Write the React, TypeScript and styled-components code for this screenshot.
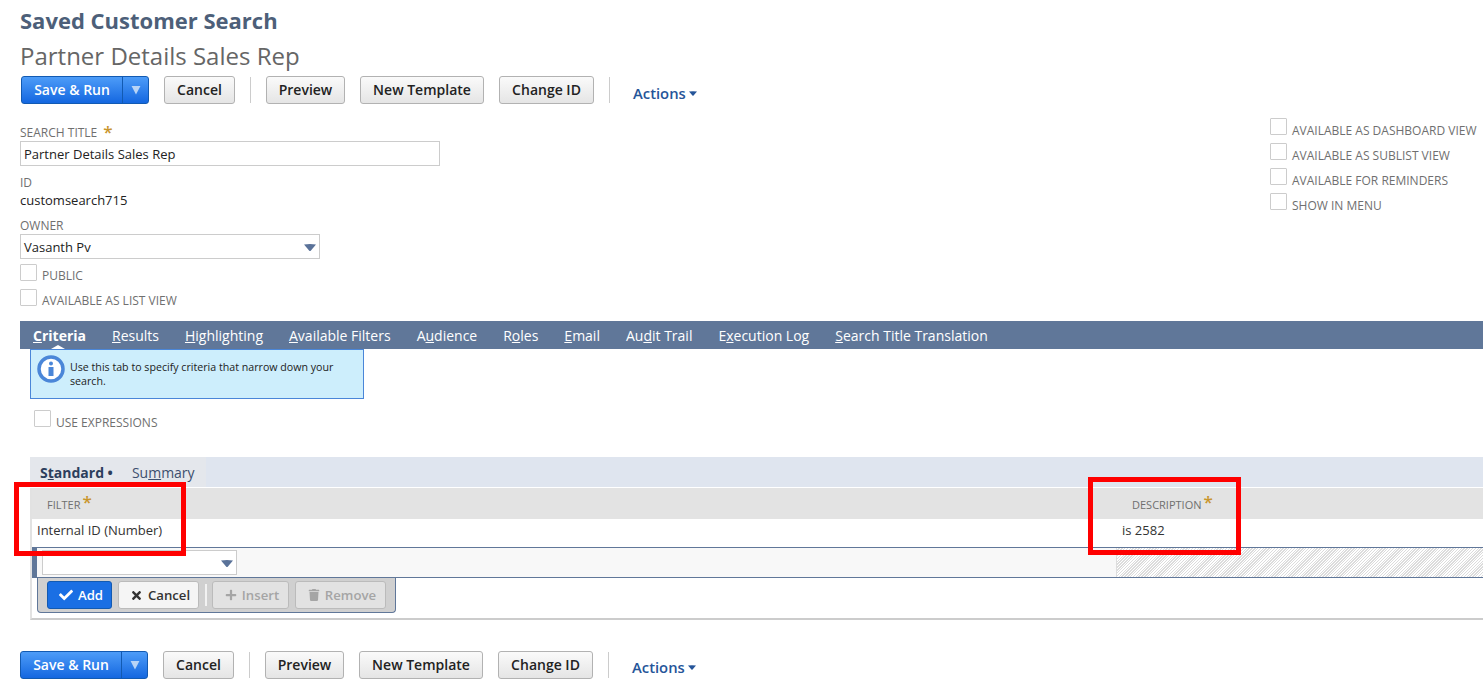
import React from "react";
import styled, { createGlobalStyle } from "styled-components";
import { FaCheck, FaTimes, FaPlus, FaTrash } from "react-icons/fa";

const Global = createGlobalStyle`
  html, body { margin: 0; padding: 0; background: #fff; }
  body { font-family: "Open Sans", "Liberation Sans", sans-serif; overflow: hidden; }
`;
const Page = styled.div`
  position: relative;
  width: 1483px;
  height: 689px;
  overflow: hidden;
`;
const Header = styled.header`
  padding: 5px 0 0 20px;
`;
const RecordType = styled.h1`
  margin: 0;
  font-size: 22px;
  line-height: 30px;
  font-weight: 700;
  color: #4d5f79;
`;
const RecordName = styled.h2`
  margin: 4px 0 0;
  font-size: 24px;
  line-height: 33px;
  font-weight: 400;
  color: #666;
`;
const Toolbar = styled.div<{ $left: number; $top: number }>`
  display: flex;
  align-items: flex-start;
  margin: ${(p) => p.$top}px 0 0 ${(p) => p.$left}px;
  height: 28px;
`;
const SplitButton = styled.div`
  display: flex;
  width: 128px;
  height: 28px;
  box-sizing: border-box;
  border: 1px solid #125ab2;
  border-radius: 3px;
  background: linear-gradient(#4d9cf8, #1467e0);
  color: #fff;
  overflow: hidden;
  margin-right: 15px;
`;
const SplitMain = styled.div`
  flex: 1;
  font-size: 14px;
  font-weight: 600;
  line-height: 26px;
  text-align: center;
`;
const SplitArrow = styled.div`
  width: 25px;
  border-left: 1px solid #125ab2;
  display: flex;
  align-items: center;
  justify-content: center;
`;
const Button = styled.div<{ $w: number }>`
  width: ${(p) => p.$w}px;
  height: 28px;
  box-sizing: border-box;
  border: 1px solid #b2b2b2;
  border-radius: 3px;
  background: linear-gradient(#fafafa, #e5e5e5);
  color: #222;
  font-size: 14px;
  font-weight: 600;
  line-height: 26px;
  text-align: center;
  margin-right: 15px;
`;
const Sep = styled.div`
  width: 1px;
  height: 26px;
  background: #ccc;
  margin: 1px 15px 0 0;
`;
const Actions = styled.div<{ $top: number }>`
  margin: ${(p) => p.$top}px 0 0 8px;
  font-size: 14.8px;
  font-weight: 600;
  line-height: 20px;
  color: #255599;
  display: flex;
  align-items: center;
  gap: 3px;
`;
const FormArea = styled.div`
  display: flex;
  justify-content: space-between;
  height: 217px;
`;
const LeftFields = styled.div`
  padding: 21px 0 0 20px;
`;
const FieldLabel = styled.div<{ $top?: number }>`
  font-size: 12px;
  line-height: 16px;
  color: #6f6f6f;
  margin-top: ${(p) => p.$top ?? 0}px;
  display: flex;
`;
const Star = styled.span`
  color: #c9952c;
  font-size: 17px;
  line-height: 14px;
  margin-left: 6px;
  font-weight: 600;
`;
const TextBox = styled.div<{ $w: number; $h: number }>`
  width: ${(p) => p.$w}px;
  height: ${(p) => p.$h}px;
  box-sizing: border-box;
  border: 1px solid #ccc;
  background: #fff;
  font-size: 13px;
  line-height: 18px;
  color: #222;
  padding: 1px 3px 0;
  display: flex;
  align-items: center;
  justify-content: space-between;
`;
const Value = styled.div`
  font-size: 13px;
  line-height: 18px;
  color: #222;
`;
const CheckRow = styled.div<{ $top?: number; $left?: number }>`
  display: flex;
  height: 25px;
  margin-top: ${(p) => p.$top ?? 0}px;
  margin-left: ${(p) => p.$left ?? 0}px;
`;
const Check = styled.div`
  width: 17px;
  height: 17px;
  box-sizing: border-box;
  border: 1px solid #ccc;
  border-radius: 1px;
  background: #fff;
  flex: none;
`;
const CheckLabel = styled.span<{ $drop?: number }>`
  font-size: 12px;
  line-height: 16px;
  color: #6f6f6f;
  margin: ${(p) => p.$drop ?? 4}px 0 0 5px;
  white-space: nowrap;
`;
const RightChecks = styled.div`
  padding: 14px 6px 0 0;
  width: 213px;
  box-sizing: border-box;
`;
const TabBar = styled.nav`
  margin-left: 20px;
  height: 28px;
  background: #607799;
  display: flex;
  align-items: flex-start;
  padding-left: 13px;
  gap: 26px;
`;
const Tab = styled.div<{ $active?: boolean }>`
  position: relative;
  height: 28px;
  font-size: 14px;
  line-height: 30px;
  color: #fff;
  font-weight: ${(p) => (p.$active ? 700 : 400)};
  white-space: nowrap;
  ${(p) =>
    p.$active &&
    `&::after {
      content: "";
      position: absolute;
      left: 18px;
      bottom: 0;
      border: 7px solid transparent;
      border-top: 0;
      border-bottom: 4px solid #fff;
    }`}
`;
const Panel = styled.section`
  margin-left: 30px;
`;
const Help = styled.div`
  width: 334px;
  height: 50px;
  box-sizing: border-box;
  border: 1px solid #4a86d8;
  background: #cdeefc;
  display: flex;
  padding: 5px 6px;
  gap: 5px;
  font-size: 10.65px;
  line-height: 14px;
  color: #222;
`;
const HelpText = styled.div`
  padding-top: 5px;
`;
const SubTabs = styled.div`
  margin-top: 22px;
  height: 30px;
  background: #dfe5ef;
  display: flex;
`;
const SubTabGroup = styled.div`
  width: 176px;
  background: #e4e7ec;
  display: flex;
  padding-left: 10px;
  gap: 19px;
  box-sizing: border-box;
  font-size: 14px;
  line-height: 32px;
`;
const SubActive = styled.span`
  font-weight: 700;
  color: #2c3e5c;
`;
const SubIdle = styled.span`
  color: #3d4f6e;
`;
const Frame = styled.div`
  border-left: 2px solid #e2e2e2;
  border-bottom: 2px solid #ccc;
  height: 132px;
  box-sizing: border-box;
  margin-top: 1px;
`;
const HeadRow = styled.div`
  height: 31px;
  background: #e3e3e3;
  display: flex;
  align-items: center;
  font-size: 11px;
  color: #6f6f6f;
`;
const HeadCell = styled.div<{ $x: number; $w?: number }>`
  margin-left: ${(p) => p.$x}px;
  ${(p) => (p.$w ? `width: ${p.$w}px;` : "")}
  flex: none;
  display: flex;
  align-items: center;
  padding-top: 2px;
`;
const HeadStar = styled.span`
  color: #c9952c;
  font-size: 17px;
  line-height: 10px;
  margin: -5px 0 0 2px;
  font-weight: 600;
`;
const DataRow = styled.div`
  height: 28px;
  display: flex;
  font-size: 13px;
  line-height: 23px;
  color: #333;
`;
const DataCell = styled.div<{ $x: number; $w?: number }>`
  margin-left: ${(p) => p.$x}px;
  ${(p) => (p.$w ? `width: ${p.$w}px;` : "")}
  flex: none;
`;
const EditRow = styled.div`
  height: 31px;
  box-sizing: border-box;
  border-top: 1px solid #607799;
  border-bottom: 1px solid #607799;
  border-left: 5px solid #607799;
  background: #f8f8f8;
  display: flex;
  padding-left: 5px;
`;
const SelectWrap = styled.div`
  margin-top: 2px;
`;
const Hatch = styled.div`
  margin-left: 879px;
  flex: 1;
  border-left: 1px solid #ddd;
  background: repeating-linear-gradient(-45deg, #fff, #fff 1px, #dcdcdc 1px, #dcdcdc 2px);
`;
const ActionBar = styled.div`
  margin-left: 5px;
  width: 359px;
  height: 35px;
  box-sizing: border-box;
  border: 1px solid #607799;
  border-top: 0;
  border-radius: 0 0 4px 4px;
  background: #d0d0d0;
  display: flex;
  align-items: flex-start;
  padding: 3px 0 0 9px;
`;
const RowButton = styled.div<{ $w: number; $kind: "primary" | "normal" | "off" }>`
  width: ${(p) => p.$w}px;
  height: 28px;
  box-sizing: border-box;
  border-radius: 3px;
  margin-right: 6px;
  font-size: 13.2px;
  font-weight: 600;
  display: flex;
  align-items: center;
  justify-content: center;
  gap: 5px;
  padding-left: 3px;
  border: 1px solid ${(p) => (p.$kind === "primary" ? "#125ab2" : "#bbb")};
  background: ${(p) => (p.$kind === "primary" ? "#1a6fe4" : p.$kind === "normal" ? "#f5f5f5" : "#e2e2e2")};
  color: ${(p) => (p.$kind === "primary" ? "#fff" : p.$kind === "normal" ? "#333" : "#a5a5a5")};
`;
const BarSep = styled.div`
  width: 2px;
  height: 22px;
  background: #f2f2f2;
  margin: 3px 5px 0 0;
`;
const RedBox = styled.div<{ $x: number; $y: number; $w: number; $h: number }>`
  position: absolute;
  left: ${(p) => p.$x}px;
  top: ${(p) => p.$y}px;
  width: ${(p) => p.$w}px;
  height: ${(p) => p.$h}px;
  box-sizing: border-box;
  border: 5px solid #ff0000;
`;

const Caret = ({ color = "#5a7299", w = 12, h = 7 }: { color?: string; w?: number; h?: number }) => (
  <svg width={w} height={h} viewBox="0 0 12 7">
    <path d="M0 0.5Q6 -0.5 12 0.5L6.5 7H5.5Z" fill={color} />
  </svg>
);
const Info = () => (
  <svg width="28" height="28" viewBox="0 0 28 28" style={{ flex: "none" }}>
    <circle cx="14" cy="14" r="12" fill="#fff" stroke="#4a86d8" strokeWidth="3.5" />
    <circle cx="14" cy="8.5" r="2" fill="#4a86d8" />
    <rect x="11.5" y="12" width="5" height="9" fill="#4a86d8" />
  </svg>
);
const SearchActions = ({ top, left, actionsTop }: { top: number; left: number; actionsTop: number }) => (
  <Toolbar $left={left} $top={top}>
    <SplitButton>
      <SplitMain>Save &amp; Run</SplitMain>
      <SplitArrow>
        <svg width="10" height="10" viewBox="0 0 9 9">
          <path d="M0.5 1H8.5L4.5 8.5Z" fill="#b8d4f6" />
        </svg>
      </SplitArrow>
    </SplitButton>
    <Button $w={71}>Cancel</Button>
    <Sep />
    <Button $w={79}>Preview</Button>
    <Button $w={124}>New Template</Button>
    <Button $w={95}>Change ID</Button>
    <Sep />
    <Actions $top={actionsTop}>
      Actions
      <Caret color="#255599" w={8} h={5} />
    </Actions>
  </Toolbar>
);

export default function App() {
  return (
    <Page>
      <Global />
      <Header>
        <RecordType>Saved Customer Search</RecordType>
        <RecordName>Partner Details Sales Rep</RecordName>
      </Header>
      <SearchActions top={4} left={21} actionsTop={7} />
      <FormArea>
        <LeftFields>
          <FieldLabel>
            SEARCH TITLE<Star>*</Star>
          </FieldLabel>
          <TextBox $w={420} $h={25}>Partner Details Sales Rep</TextBox>
          <FieldLabel $top={9}>ID</FieldLabel>
          <Value>customsearch715</Value>
          <FieldLabel $top={9}>OWNER</FieldLabel>
          <TextBox $w={300} $h={25}>
            Vasanth Pv
            <Caret />
          </TextBox>
          <CheckRow $top={5}>
            <Check />
            <CheckLabel>PUBLIC</CheckLabel>
          </CheckRow>
          <CheckRow>
            <Check />
            <CheckLabel>AVAILABLE AS LIST VIEW</CheckLabel>
          </CheckRow>
        </LeftFields>
        <RightChecks>
          <CheckRow><Check /><CheckLabel $drop={5}>AVAILABLE AS DASHBOARD VIEW</CheckLabel></CheckRow>
          <CheckRow><Check /><CheckLabel $drop={5}>AVAILABLE AS SUBLIST VIEW</CheckLabel></CheckRow>
          <CheckRow><Check /><CheckLabel $drop={5}>AVAILABLE FOR REMINDERS</CheckLabel></CheckRow>
          <CheckRow><Check /><CheckLabel $drop={5}>SHOW IN MENU</CheckLabel></CheckRow>
        </RightChecks>
      </FormArea>
      <TabBar>
        <Tab $active><u>C</u>riteria</Tab>
        <Tab><u>R</u>esults</Tab>
        <Tab><u>H</u>ighlighting</Tab>
        <Tab><u>A</u>vailable Filters</Tab>
        <Tab>A<u>u</u>dience</Tab>
        <Tab>R<u>o</u>les</Tab>
        <Tab><u>E</u>mail</Tab>
        <Tab>Au<u>d</u>it Trail</Tab>
        <Tab>E<u>x</u>ecution Log</Tab>
        <Tab><u>S</u>earch Title Translation</Tab>
      </TabBar>
      <Panel>
        <Help>
          <Info />
          <HelpText>Use this tab to specify criteria that narrow down your search.</HelpText>
        </Help>
        <CheckRow $top={11} $left={4}>
          <Check />
          <CheckLabel $drop={5}>USE EXPRESSIONS</CheckLabel>
        </CheckRow>
        <SubTabs>
          <SubTabGroup>
            <SubActive>S<u>t</u>andard •</SubActive>
            <SubIdle>Su<u>m</u>mary</SubIdle>
          </SubTabGroup>
        </SubTabs>
        <Frame>
          <HeadRow>
            <HeadCell $x={15} $w={1070}>FILTER<HeadStar>*</HeadStar></HeadCell>
            <HeadCell $x={15}>DESCRIPTION<HeadStar>*</HeadStar></HeadCell>
          </HeadRow>
          <DataRow>
            <DataCell $x={5} $w={1085}>Internal ID (Number)</DataCell>
            <DataCell $x={0}>is 2582</DataCell>
          </DataRow>
          <EditRow>
            <SelectWrap>
              <TextBox $w={195} $h={25}>
                <span />
                <Caret />
              </TextBox>
            </SelectWrap>
            <Hatch />
          </EditRow>
          <ActionBar>
            <RowButton $w={65} $kind="primary"><FaCheck size={14} />Add</RowButton>
            <RowButton $w={81} $kind="normal"><FaTimes size={13} />Cancel</RowButton>
            <BarSep />
            <RowButton $w={77} $kind="off"><FaPlus size={12} />Insert</RowButton>
            <RowButton $w={91} $kind="off"><FaTrash size={12} />Remove</RowButton>
          </ActionBar>
        </Frame>
      </Panel>
      <SearchActions top={31} left={20} actionsTop={6} />
      <RedBox $x={14} $y={482} $w={172} $h={74} />
      <RedBox $x={1088} $y={477} $w={153} $h={78} />
    </Page>
  );
}
